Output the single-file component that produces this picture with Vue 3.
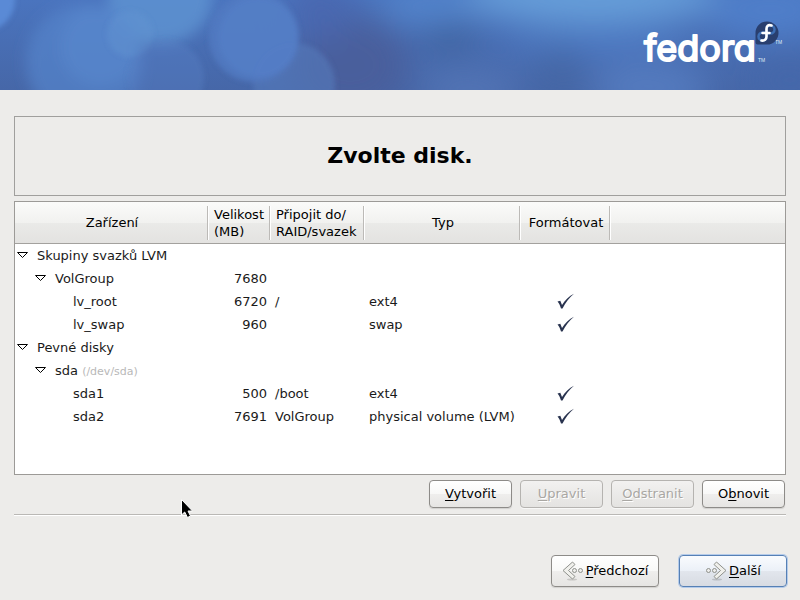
<script setup>
import { ref, computed } from 'vue'

const groups = ref([
  {
    name: 'Skupiny svazků LVM',
    open: true,
    children: [
      {
        name: 'VolGroup',
        size: 7680,
        open: true,
        children: [
          { name: 'lv_root', size: 6720, mount: '/', type: 'ext4', format: true },
          { name: 'lv_swap', size: 960, type: 'swap', format: true },
        ],
      },
    ],
  },
  {
    name: 'Pevné disky',
    open: true,
    children: [
      {
        name: 'sda',
        path: '(/dev/sda)',
        open: true,
        children: [
          { name: 'sda1', size: 500, mount: '/boot', type: 'ext4', format: true },
          { name: 'sda2', size: 7691, mount: 'VolGroup', type: 'physical volume (LVM)', format: true },
        ],
      },
    ],
  },
])

function flatten(items, level = 0) {
  return items.flatMap((item) => [
    { item, level },
    ...(item.children && item.open ? flatten(item.children, level + 1) : []),
  ])
}

const rows = computed(() => flatten(groups.value))

function toggle(item) {
  item.open = !item.open
}
</script>

<template>
  <div class="installer">
    <header class="banner">
      <svg class="banner-art" viewBox="0 0 800 90" preserveAspectRatio="xMidYMid slice" aria-hidden="true">
        <defs>
          <linearGradient id="base" x1="0" y1="0" x2="0" y2="1">
            <stop offset="0" stop-color="#4a74be" />
            <stop offset="1" stop-color="#4667a8" />
          </linearGradient>
          <filter id="soft" x="-50%" y="-50%" width="200%" height="200%">
            <feGaussianBlur stdDeviation="2.500" />
          </filter>
          <filter id="blur" x="-50%" y="-50%" width="200%" height="200%">
            <feGaussianBlur stdDeviation="7" />
          </filter>
          <filter id="haze" x="-100%" y="-100%" width="300%" height="300%">
            <feGaussianBlur stdDeviation="16" />
          </filter>
        </defs>
        <rect width="800" height="90" fill="url(#base)" />
        <g filter="url(#haze)">
          <ellipse cx="350" cy="65" rx="60" ry="50" fill="#4a5f9c" />
          <ellipse cx="320" cy="10" rx="34" ry="30" fill="#4a68b0" />
          <ellipse cx="590" cy="-4" rx="130" ry="26" fill="#669ed9" />
          <ellipse cx="425" cy="5" rx="45" ry="14" fill="#5588cf" />
          <ellipse cx="770" cy="10" rx="60" ry="26" fill="#4f7fca" />
          <ellipse cx="600" cy="40" rx="90" ry="16" fill="#4e79c2" />
          <ellipse cx="450" cy="40" rx="30" ry="14" fill="#40639f" />
          <ellipse cx="560" cy="72" rx="26" ry="24" fill="#4466a4" />
          <ellipse cx="470" cy="90" rx="50" ry="20" fill="#5275b6" />
          <ellipse cx="650" cy="88" rx="60" ry="24" fill="#547cc0" />
          <ellipse cx="790" cy="80" rx="40" ry="24" fill="#4568aa" />
        </g>
        <g filter="url(#blur)">
          <ellipse cx="160" cy="-2" rx="52" ry="46" fill="#5e93d2" opacity=".8" />
          <circle cx="84" cy="62" r="58" fill="#5583ca" opacity=".7" />
          <circle cx="100" cy="46" r="40" fill="#5a89d0" opacity=".5" />
        </g>
        <g filter="url(#soft)">
          <circle cx="-16" cy="0" r="31" fill="#5a8ad6" />
          <circle cx="130" cy="34" r="23" fill="#6496d2" opacity=".4" />
          <circle cx="166" cy="78" r="38" fill="#5880c6" opacity=".4" />
          <circle cx="294" cy="84" r="41" fill="#5579ba" opacity=".6" />
          <circle cx="254" cy="37" r="45" fill="#527bc2" opacity=".8" />
          <circle cx="258" cy="37" r="40" fill="#567fc8" opacity=".7" />
        </g>
      </svg>
      <svg class="logo" width="144" height="48" viewBox="0 0 144 48" role="img" aria-label="fedora">
        <text class="wordmark" x="1" y="41">fedora</text>
        <text class="tm" x="115" y="42">TM</text>
        <text class="tm" x="132" y="24">TM</text>
        <path d="M124 1.500a11.500 11.500 0 0 1 0 23h-9.500a2 2 0 0 1-2-2v-9.500a11.500 11.500 0 0 1 11.500-11.500z" fill="#293f6f" />
        <path
          d="M123.500 13v3.500a4 4 0 1 1-4-4h3.500M123.500 13V9.500a4 4 0 1 1 4 4h-3.500"
          fill="none" stroke="#3c6eb4" stroke-width="2.500" />
        <path
          d="M128.500 5.500c-3.500-1.200-5 .8-5 3.500v7.500c0 3-2 4.500-5 4M119.500 13h7"
          fill="none" stroke="#fff" stroke-width="2.600" stroke-linecap="round" />
      </svg>
    </header>

    <main class="content">
      <h1 class="title">Zvolte disk.</h1>

      <div class="tree">
        <table>
          <colgroup>
            <col class="col-device" />
            <col class="col-size" />
            <col class="col-mount" />
            <col class="col-type" />
            <col class="col-format" />
            <col />
          </colgroup>
          <thead>
            <tr>
              <th scope="col">Zařízení</th>
              <th scope="col" class="start">Velikost<br />(MB)</th>
              <th scope="col" class="start">Připojit do/<br />RAID/svazek</th>
              <th scope="col">Typ</th>
              <th scope="col">Formátovat</th>
              <td></td>
            </tr>
          </thead>
          <tbody>
            <tr v-for="{ item, level } in rows" :key="item.name">
              <td :colspan="level === 0 ? 6 : 1">
                <div class="device" :class="'level-' + level">
                  <button
                    v-if="item.children"
                    class="expander"
                    :class="{ closed: !item.open }"
                    :aria-expanded="item.open"
                    :aria-label="item.name"
                    @click="toggle(item)"
                  >
                    <svg width="12" height="8" viewBox="0 0 12 8">
                      <path d="M.5 1.500h10L5.500 6.500z" fill="#fff" stroke="#000" />
                    </svg>
                  </button>
                  <span>{{ item.name }} <small v-if="item.path">{{ item.path }}</small></span>
                </div>
              </td>
              <template v-if="level > 0">
                <td class="size">{{ item.size }}</td>
                <td>{{ item.mount }}</td>
                <td>{{ item.type }}</td>
                <td class="format">
                  <svg v-if="item.format" width="18" height="16" viewBox="0 0 18 16" role="img" aria-label="Ano">
                    <path d="M.5 8.500l2.800-.8 1.700 4.300C8 7.500 12 3 17 .8 12.500 4.500 8.500 9.500 5.500 15.500H4C3.300 13 2.200 10.500.5 8.500z" fill="#29334f" />
                  </svg>
                </td>
                <td></td>
              </template>
            </tr>
          </tbody>
        </table>
      </div>

      <div class="actions">
        <button class="btn"><span><u>V</u>ytvořit</span></button>
        <button class="btn" disabled><span><u>U</u>pravit</span></button>
        <button class="btn" disabled><span><u>O</u>dstranit</span></button>
        <button class="btn"><span>O<u>b</u>novit</span></button>
      </div>
    </main>

    <footer class="nav">
      <button class="btn nav-btn">
        <svg width="22" height="20" viewBox="0 0 22 20" aria-hidden="true">
          <ellipse cx="10" cy="18.500" rx="5" ry="1" fill="#000" opacity=".15" />
          <path d="M10.500 1l2.500 2.500L6.500 9.500l6.500 6L10.500 18 1 9.500z" fill="#f0f0ec" stroke="#8f918c" stroke-linejoin="round" />
          <circle cx="12.500" cy="9.500" r="2" fill="#eeeeec" stroke="#8f918c" />
          <circle cx="18.500" cy="9.500" r="2" fill="#eeeeec" stroke="#8f918c" />
        </svg>
        <span><u>P</u>ředchozí</span>
      </button>
      <button class="btn nav-btn primary">
        <svg width="22" height="20" viewBox="0 0 22 20" aria-hidden="true">
          <ellipse cx="12" cy="18.500" rx="5" ry="1" fill="#000" opacity=".15" />
          <path d="M11.500 1L9 3.500l6.500 6-6.500 6 2.500 2.500L21 9.500z" fill="#f0f0ec" stroke="#8f918c" stroke-linejoin="round" />
          <circle cx="3.500" cy="9.500" r="2" fill="#eeeeec" stroke="#8f918c" />
          <circle cx="9.500" cy="9.500" r="2" fill="#eeeeec" stroke="#8f918c" />
        </svg>
        <span><u>D</u>alší</span>
      </button>
    </footer>

    <svg class="pointer" width="14" height="20" viewBox="0 0 14 20" aria-hidden="true">
      <path d="M.5.5v15.500l3.200-3 2.800 5.500 3-1.500-2.500-5h4.500z" fill="#000" stroke="#fff" />
    </svg>
  </div>
</template>

<style>
body {
  background: #edecea;
}
</style>

<style scoped>
.installer {
  position: relative;
  display: flex;
  flex-direction: column;
  min-height: 100vh;
  color: #000;
  font-family: "DejaVu Sans", sans-serif;
  font-size: 13px;
  line-height: 17px;
}

.banner {
  display: flex;
  justify-content: flex-end;
  position: relative;
  box-sizing: border-box;
  height: 90px;
  padding: 20px 13px 0 0;
  overflow: hidden;
}

.banner-art {
  position: absolute;
  inset: 0;
  width: 100%;
  height: 100%;
}

.logo {
  position: relative;
  overflow: visible;
}

.wordmark {
  fill: #fff;
  stroke: #fff;
  stroke-width: 2px;
  stroke-linejoin: round;
  font-family: Inter, "Open Sans", sans-serif;
  font-feature-settings: "cv11";
  font-size: 36px;
  font-weight: 400;
}

.tm {
  fill: #dfe7f5;
  font-family: "Liberation Sans", sans-serif;
  font-size: 5px;
}

.content {
  display: flex;
  flex-direction: column;
  flex: 1;
  padding: 26px 14px 0;
}

.title {
  margin: 0 0 5px;
  padding: 26px 0;
  border: 1px solid #a09f9d;
  font-size: 22px;
  font-weight: bold;
  line-height: 26px;
  text-align: center;
}

.tree {
  flex: 1;
  border: 1px solid #9c9a97;
  background: #fff;
}

table {
  width: 100%;
  table-layout: fixed;
  border-collapse: separate;
  border-spacing: 0;
}

.col-device {
  width: 194px;
}

.col-size {
  width: 62px;
}

.col-mount {
  width: 94px;
}

.col-type {
  width: 156px;
}

.col-format {
  width: 90px;
}

thead tr {
  height: 42px;
  background: linear-gradient(#fbfbfa, #f1f1ef 50%, #eaeae8 50%, #e3e2e0);
}

th,
thead td {
  padding: 0;
  border-bottom: 1px solid #a3a19e;
  font-weight: normal;
  white-space: nowrap;
}

th {
  background: linear-gradient(#bcbab7, #bcbab7) right 1px center / 1px 34px no-repeat,
    linear-gradient(#fff, #fff) right center / 1px 34px no-repeat;
}

th.start {
  padding-left: 5px;
  text-align: left;
}

tbody td {
  height: 22px;
  padding: 0 4px 1px;
  color: #1a1a1a;
  white-space: nowrap;
}

tbody td:first-child {
  padding: 0 0 1px;
}

tbody td.size {
  text-align: right;
}

.format {
  text-align: center;
}

.format svg {
  display: block;
  margin: 0 auto;
}

.device {
  display: flex;
  align-items: center;
  gap: 8px;
  padding-left: 2px;
}

.level-1 {
  padding-left: 20px;
}

.level-2 {
  padding-left: 58px;
}

.expander {
  display: flex;
  padding: 0;
  border: 0;
  background: none;
}

.expander.closed svg {
  transform: rotate(-90deg);
}

small {
  color: #b8b8b8;
  font-size: 11px;
  line-height: 1;
}

.actions {
  display: flex;
  justify-content: flex-end;
  gap: 8px;
  padding: 5px 1px 6px;
  border-bottom: 1px solid #bab8b5;
  box-shadow: 0 1px #fff;
}

.btn {
  display: flex;
  align-items: center;
  justify-content: center;
  box-sizing: border-box;
  width: 83px;
  height: 28px;
  padding: 0 0 1px;
  border: 1px solid #8d8b88;
  border-radius: 4px;
  background: linear-gradient(#fff, #f8f8f7 50%, #efeeed 50%, #e6e5e3);
  box-shadow: 0 1px 1px rgba(0, 0, 0, 0.12);
  color: #000;
  font: inherit;
}

.btn u {
  text-underline-offset: 2px;
}

.btn:disabled {
  border-color: #b5b3b0;
  background: linear-gradient(#f2f1f0, #e4e3e1);
  box-shadow: 0 1px #f8f8f7;
  color: #a9a7a3;
  text-shadow: 1px 1px #fff;
}

.nav {
  display: flex;
  justify-content: flex-end;
  gap: 20px;
  padding: 40px 13px 13px;
}

.nav-btn {
  gap: 2px;
  width: 108px;
  height: 32px;
}

.primary {
  border-color: #5680b5;
  background: linear-gradient(#f9fbfe, #ebf0f7 50%, #e2e6ed 50%, #d7dbe2);
  box-shadow: 0 0 0 1px #b4cbea;
}

.pointer {
  position: absolute;
  top: 499px;
  left: 181px;
  pointer-events: none;
}
</style>
